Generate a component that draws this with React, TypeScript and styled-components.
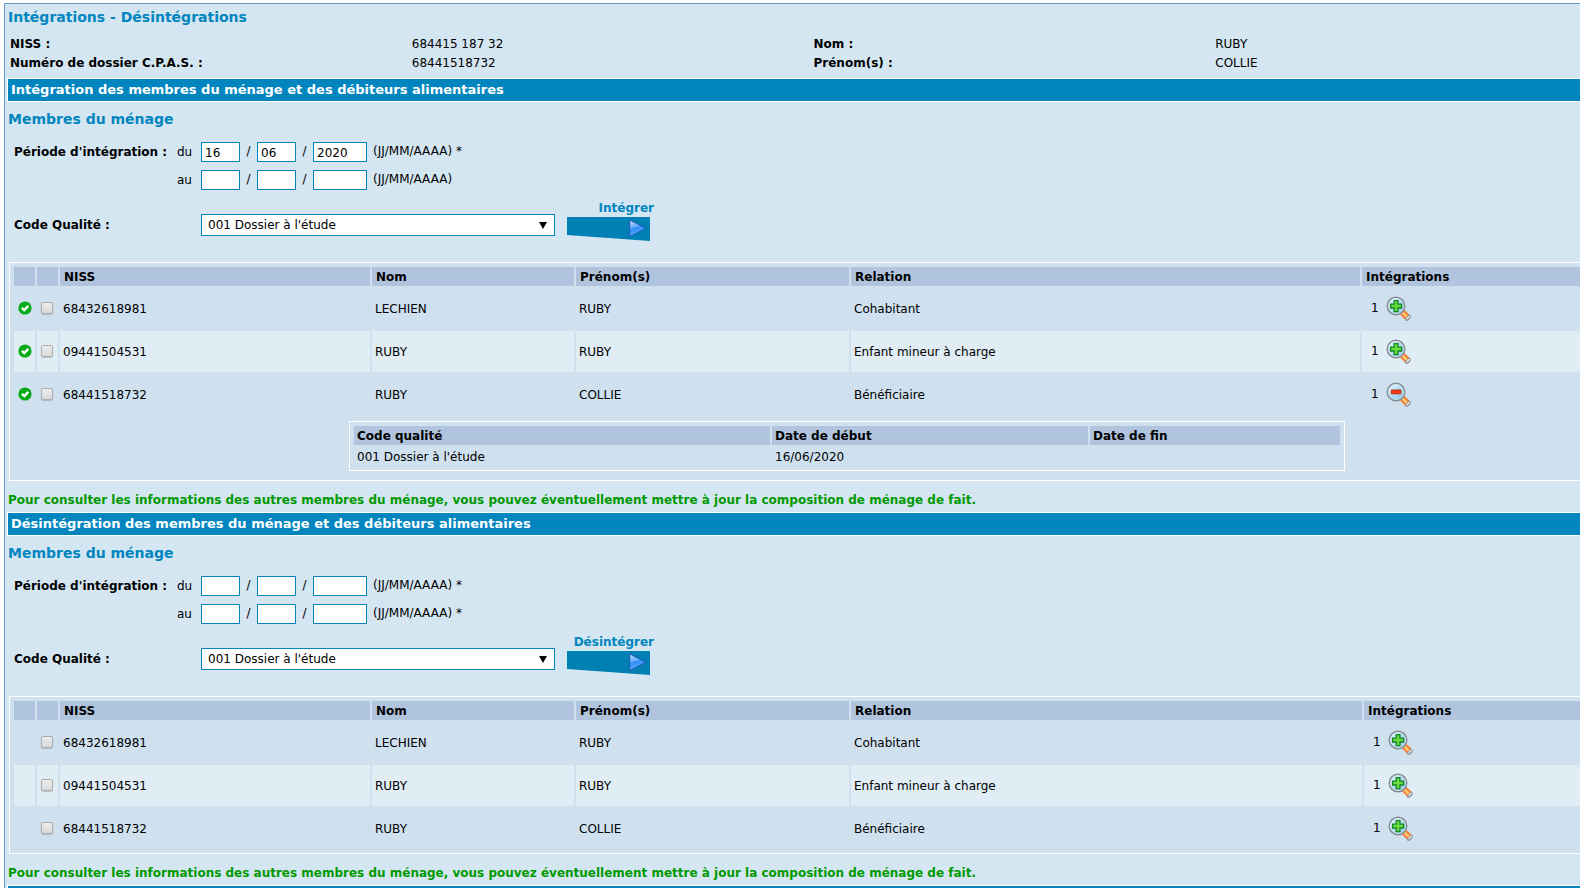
import React, { useId, useState } from 'react';
import styled, { createGlobalStyle } from 'styled-components';

const GlobalStyle = createGlobalStyle`
  *, *::before, *::after { box-sizing: border-box; }
  html { background: #fff; }
  body {
    margin: 0;
    overflow-x: hidden;
    color: #000;
    font-family: Verdana, "DejaVu Sans", sans-serif;
    font-size: 12px;
    line-height: 19px;
  }
`;

const Frame = styled.main`
  margin: 3px -41px 0 4px;
  border: 1px solid #6699cc;
  padding: 2px 0 0 2px;
  background: #d4e6f1;
`;

const PageTitle = styled.h1`
  margin: 0;
  padding: 0 1px;
  color: #0085bf;
  font-size: 14px;
  line-height: 22px;
`;

const Identity = styled.dl`
  display: grid;
  grid-template-columns: repeat(4, 1fr);
  margin: 7px 0 5px;
  padding: 0 3px;
`;

const IdentityLabel = styled.dt`
  font-weight: bold;
`;

const IdentityValue = styled.dd`
  margin: 0;
`;

const Section = styled.section`
  display: flex;
  flex-direction: column;
`;

const Bar = styled.h2`
  margin: 0;
  padding: 0 3px;
  border: 1px solid #fff;
  background: #0085bf;
  color: #fff;
  font-size: 13px;
  line-height: 22px;
`;

const SubTitle = styled.h3`
  margin: 6px 0 12px;
  padding: 0 1px;
  color: #0085bf;
  font-size: 14px;
  line-height: 22px;
`;

const Form = styled.form`
  display: flex;
  flex-direction: column;
  gap: 8px;
  padding: 0 7px 26px;
`;

const FormRow = styled.div`
  display: flex;
  align-items: center;
  height: 20px;
`;

const QualityRow = styled.div`
  display: flex;
  align-items: center;
  height: 22px;
  margin-top: 16px;
`;

const Label = styled.span`
  flex: 0 0 163px;
  font-weight: bold;
  white-space: nowrap;
`;

const QualityLabel = styled.label`
  flex: 0 0 187px;
  font-weight: bold;
`;

const Edge = styled.span`
  flex: 0 0 24px;
`;

const DateBox = styled.input<{ $wide?: boolean }>`
  width: ${(p) => (p.$wide ? 54 : 39)}px;
  height: 20px;
  padding: 1px 3px 0;
  border: 1px solid #0085bf;
  border-radius: 0;
  background: #fff;
  color: #000;
  font: inherit;
`;

const Slash = styled.span`
  width: 17px;
  padding-bottom: 2px;
  text-align: center;
`;

const Hint = styled.span`
  padding: 0 0 2px 6px;
`;

const SelectWrap = styled.div`
  position: relative;
  flex: 0 0 354px;
`;

const Select = styled.select`
  display: block;
  width: 100%;
  height: 22px;
  padding: 1px 6px 0;
  border: 1px solid #0085bf;
  border-radius: 0;
  appearance: none;
  background: #fff;
  color: #000;
  font: inherit;
`;

const Caret = styled.svg`
  position: absolute;
  top: 8px;
  right: 8px;
  pointer-events: none;
`;

const ActionButton = styled.button`
  display: flex;
  flex-direction: column;
  align-items: flex-end;
  align-self: flex-end;
  width: 87px;
  margin: 0 0 -5px 12px;
  padding: 0;
  border: 0;
  background: none;
  color: #0085bf;
  font: inherit;
  font-weight: bold;
  line-height: 17px;
  cursor: pointer;

  svg { display: block; margin-right: 4px; }
`;

const Members = styled.table`
  width: calc(100% - 4px);
  margin-left: 2px;
  padding: 2px;
  border: 1px solid #fff;
  border-spacing: 2px;
  table-layout: fixed;
  background: #cfe1ef;
`;

const HeadCell = styled.th`
  height: 19px;
  padding: 1px 4px 0;
  background: #b0c4de;
  line-height: 18px;
  text-align: left;
`;

const Row = styled.tr<{ $alt: boolean }>`
  background: ${(p) => (p.$alt ? '#e0edf5' : 'transparent')};
`;

const Cell = styled.td`
  height: 41px;
  padding: 0 3px;
`;

const TextCell = styled(Cell)`
  padding-top: 2px;
`;

const MarkCell = styled(Cell)`
  padding: 0 4px 2px;
`;

const DetailCell = styled.td`
  height: 59px;
  padding: 4px 0 4px 335px;
  vertical-align: top;
`;

const Details = styled.table`
  width: 996px;
  padding: 2px;
  border: 1px solid #fff;
  border-spacing: 2px;
  table-layout: fixed;
`;

const DetailHead = styled(HeadCell)`
  padding: 1px 3px 0;
`;

const DetailValue = styled.td`
  height: 19px;
  padding: 1px 3px 0;
  line-height: 18px;
`;

const OkMark = styled.svg`
  display: block;
`;

const Tick = styled.input`
  display: block;
  width: 12px;
  height: 12px;
  margin: 0;
  border: 1px solid #adadad;
  border-radius: 2px;
  appearance: none;
  background: linear-gradient(#ededed, #d9d9d9);
  box-shadow: 0 1px 1px rgba(0, 0, 0, 0.18);

  &:checked { background: #0085bf; }
`;

const Count = styled.div`
  display: flex;
  align-items: center;
  gap: 7px;
  padding-left: 6px;
`;

const ZoomButton = styled.button`
  width: 26px;
  height: 26px;
  padding: 0;
  border: 0;
  background: none;
  cursor: pointer;

  svg { display: block; }
`;

const Note = styled.p`
  margin: 0;
  padding: 10px 1px 2px;
  color: #009900;
  font-weight: bold;
`;

function OkIcon() {
  return (
    <OkMark width="14" height="14" viewBox="0 0 14 14" role="img" aria-label="Intégré">
      <circle cx="7" cy="7" r="6.6" fill="#06ab18" />
      <path d="M3.9 6.8 6.3 9.1 10.3 4.9" fill="none" stroke="#fff" strokeWidth="2.3" />
    </OkMark>
  );
}

function Magnifier({ minus }: { minus?: boolean }) {
  const id = useId();
  return (
    <svg width="26" height="26" viewBox="0 0 26 26" aria-hidden="true">
      <defs>
        <linearGradient id={`${id}l`} x1="0" y1="0" x2="1" y2="1">
          <stop offset="0" stopColor="#f2faff" />
          <stop offset="0.5" stopColor="#b3ddf5" />
          <stop offset="1" stopColor="#8ec8ee" />
        </linearGradient>
        <linearGradient id={`${id}h`} gradientUnits="userSpaceOnUse" x1="16" y1="21" x2="21" y2="16">
          <stop offset="0" stopColor="#f04a12" />
          <stop offset="0.25" stopColor="#fb8a35" />
          <stop offset="0.5" stopColor="#ffd98a" />
          <stop offset="0.75" stopColor="#fb8a35" />
          <stop offset="1" stopColor="#f0530f" />
        </linearGradient>
      </defs>
      <path d="m18.6 22.8 4.2-4.6 2.1 1.4-.3 2.4-2.8 2.7-2.4.1z" fill="#8f9396" />
      <path d="m20.1 22.9 3.2-3.4.9.8-3 3.2z" fill="#f4f4f4" />
      <path d="m14.2 18.6 4.4-4.4 4.5 4.2-4.3 4.6z" fill={`url(#${id}h)`} />
      <circle cx="10" cy="10" r="8.7" fill={`url(#${id}l)`} stroke="#858c91" strokeWidth="1.6" />
      <circle cx="10" cy="10" r="7.6" fill="none" stroke="#d3e3ec" strokeWidth="0.7" />
      {minus ? (
        <path d="M5.3 8h9.6v3.8H5.3z" fill="#f83e14" stroke="#c32b10" strokeWidth="1" />
      ) : (
        <path
          d="M8.2 4.6h3.8v3.6h3.6V12H12v3.6H8.2V12H4.6V8.2h3.6z"
          fill="#67dc3c"
          stroke="#128425"
          strokeWidth="1.3"
        />
      )}
    </svg>
  );
}

function ArrowBanner() {
  const id = useId();
  return (
    <svg width="83" height="24" viewBox="0 0 83 24" aria-hidden="true">
      <defs>
        <linearGradient id={id} x1="0" y1="0" x2="0.3" y2="1">
          <stop offset="0" stopColor="#c3defc" />
          <stop offset="0.45" stopColor="#68aefa" />
          <stop offset="0.55" stopColor="#2d8cf6" />
          <stop offset="1" stopColor="#68b4ff" />
        </linearGradient>
      </defs>
      <path d="M0 0h83v24L0 18z" fill="#0080b3" />
      <path d="M62.7 2.9 79 11.3 62.7 19.5z" fill={`url(#${id})`} stroke="#1d59b5" strokeWidth="1" strokeLinejoin="round" />
    </svg>
  );
}

const people = [
  { niss: '68432618981', nom: 'LECHIEN', prenom: 'RUBY', relation: 'Cohabitant' },
  { niss: '09441504531', nom: 'RUBY', prenom: 'RUBY', relation: 'Enfant mineur à charge' },
  { niss: '68441518732', nom: 'RUBY', prenom: 'COLLIE', relation: 'Bénéficiaire' },
];

type DateLineProps = { label?: string; edge: string; hint: string; values?: string[] };

function DateLine({ label, edge, hint, values = ['', '', ''] }: DateLineProps) {
  return (
    <FormRow role="group" aria-label={`Période d'intégration ${edge}`}>
      <Label>{label}</Label>
      <Edge>{edge}</Edge>
      <DateBox aria-label={`Jour ${edge}`} maxLength={2} defaultValue={values[0]} />
      <Slash>/</Slash>
      <DateBox aria-label={`Mois ${edge}`} maxLength={2} defaultValue={values[1]} />
      <Slash>/</Slash>
      <DateBox $wide aria-label={`Année ${edge}`} maxLength={4} defaultValue={values[2]} />
      <Hint>{hint}</Hint>
    </FormRow>
  );
}

type PanelProps = {
  title: string;
  action: string;
  from?: string[];
  endRequired?: boolean;
  integrated?: boolean;
  opened?: string;
  lastColumn: number;
};

function Panel({ title, action, from, endRequired, integrated, opened, lastColumn }: PanelProps) {
  const selectId = useId();
  const [open, setOpen] = useState(opened);
  return (
    <Section>
      <Bar>{title}</Bar>
      <SubTitle>Membres du ménage</SubTitle>
      <Form onSubmit={(e) => e.preventDefault()}>
        <DateLine label="Période d'intégration :" edge="du" hint="(JJ/MM/AAAA) *" values={from} />
        <DateLine edge="au" hint={endRequired ? '(JJ/MM/AAAA) *' : '(JJ/MM/AAAA)'} />
        <QualityRow>
          <QualityLabel htmlFor={selectId}>Code Qualité :</QualityLabel>
          <SelectWrap>
            <Select id={selectId}>
              <option>001 Dossier à l'étude</option>
            </Select>
            <Caret width="8" height="7" viewBox="0 0 8 7" aria-hidden="true">
              <path d="M0 0h8L4 7z" />
            </Caret>
          </SelectWrap>
          <ActionButton type="submit">
            {action}
            <ArrowBanner />
          </ActionButton>
        </QualityRow>
      </Form>
      <Members>
        <colgroup>
          <col width="21" />
          <col width="21" />
          <col width="310" />
          <col width="202" />
          <col width="273" />
          <col />
          <col width={lastColumn} />
        </colgroup>
        <thead>
          <tr>
            <HeadCell />
            <HeadCell />
            <HeadCell>NISS</HeadCell>
            <HeadCell>Nom</HeadCell>
            <HeadCell>Prénom(s)</HeadCell>
            <HeadCell>Relation</HeadCell>
            <HeadCell>Intégrations</HeadCell>
          </tr>
        </thead>
        <tbody>
          {people.map((p, i) => (
            <React.Fragment key={p.niss}>
              <Row $alt={i % 2 === 1}>
                <MarkCell>{integrated && <OkIcon />}</MarkCell>
                <MarkCell>
                  <Tick type="checkbox" aria-label={`Sélectionner ${p.niss}`} />
                </MarkCell>
                <TextCell>{p.niss}</TextCell>
                <TextCell>{p.nom}</TextCell>
                <TextCell>{p.prenom}</TextCell>
                <TextCell>{p.relation}</TextCell>
                <Cell>
                  <Count>
                    1
                    <ZoomButton
                      type="button"
                      aria-label={open === p.niss ? 'Masquer le détail' : 'Afficher le détail'}
                      onClick={() => setOpen(open === p.niss ? undefined : p.niss)}
                    >
                      <Magnifier minus={open === p.niss} />
                    </ZoomButton>
                  </Count>
                </Cell>
              </Row>
              {open === p.niss && (
                <tr>
                  <DetailCell colSpan={7}>
                    <Details>
                      <colgroup>
                        <col width="416" />
                        <col width="316" />
                        <col />
                      </colgroup>
                      <thead>
                        <tr>
                          <DetailHead>Code qualité</DetailHead>
                          <DetailHead>Date de début</DetailHead>
                          <DetailHead>Date de fin</DetailHead>
                        </tr>
                      </thead>
                      <tbody>
                        <tr>
                          <DetailValue>001 Dossier à l'étude</DetailValue>
                          <DetailValue>16/06/2020</DetailValue>
                          <DetailValue />
                        </tr>
                      </tbody>
                    </Details>
                  </DetailCell>
                </tr>
              )}
            </React.Fragment>
          ))}
        </tbody>
      </Members>
      <Note>
        Pour consulter les informations des autres membres du ménage, vous pouvez éventuellement mettre à jour la
        composition de ménage de fait.
      </Note>
    </Section>
  );
}

export default function App() {
  return (
    <>
      <GlobalStyle />
      <Frame>
        <PageTitle>Intégrations - Désintégrations</PageTitle>
        <Identity>
          <IdentityLabel>NISS :</IdentityLabel>
          <IdentityValue>684415 187 32</IdentityValue>
          <IdentityLabel>Nom :</IdentityLabel>
          <IdentityValue>RUBY</IdentityValue>
          <IdentityLabel>Numéro de dossier C.P.A.S. :</IdentityLabel>
          <IdentityValue>68441518732</IdentityValue>
          <IdentityLabel>Prénom(s) :</IdentityLabel>
          <IdentityValue>COLLIE</IdentityValue>
        </Identity>
        <Panel
          title="Intégration des membres du ménage et des débiteurs alimentaires"
          action="Intégrer"
          from={['16', '06', '2020']}
          integrated
          opened="68441518732"
          lastColumn={251}
        />
        <Panel
          title="Désintégration des membres du ménage et des débiteurs alimentaires"
          action="Désintégrer"
          endRequired
          lastColumn={249}
        />
        <Bar aria-hidden="true">&nbsp;</Bar>
      </Frame>
    </>
  );
}
